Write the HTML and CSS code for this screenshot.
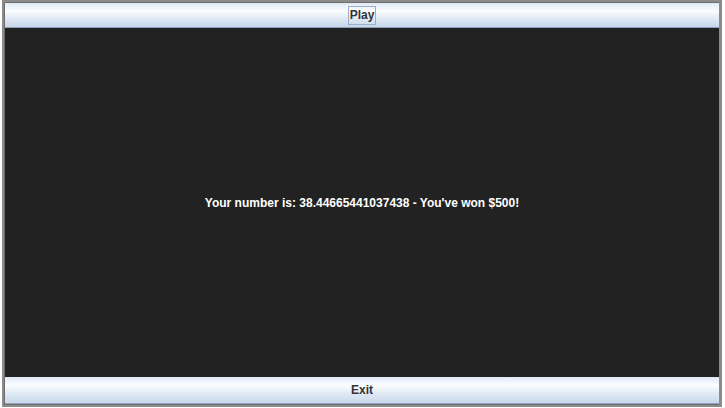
FILE: index.html
```html
<!DOCTYPE html>
<html lang="en">
<head>
    <meta charset="UTF-8">
    <title>Lottery</title>
    <link rel="stylesheet" href="styles.css">
</head>
<body>

<div class="window">
    <button class="bar-button"><span class="focus">Play</span></button>
    <div class="panel">
        <p class="result">Your number is: 38.44665441037438 - You've won $500!</p>
    </div>
    <button class="bar-button bottom">Exit</button>
</div>

</body>
</html>
```

FILE: styles.css
```css
body {
    margin: 0;
    padding: 0;
    background-color: #ffffff;
    font-family: "Liberation Sans", Arial, sans-serif;
}

.window {
    width: 720px;
    height: 407px;
    margin-left: 2px;
    box-sizing: border-box;
    border: 2px solid #8c8c8c;
    border-right-width: 3px;
    background-color: #6e6e6e;
    padding: 1px 0 1px 1px;
    display: flex;
    flex-direction: column;
}

.bar-button {
    height: 25px;
    flex: none;
    margin: 0;
    padding: 0;
    border: none;
    border-top: 1px solid #dfe8f3;
    border-bottom: 1px solid #8ea2bd;
    background: linear-gradient(to bottom, #e4ecf6 0%, #fbfdff 30%, #e2ebf5 60%, #c8d8ea 100%);
    color: #333333;
    font-family: "Liberation Sans", Arial, sans-serif;
    font-size: 12px;
    font-weight: bold;
    display: flex;
    align-items: center;
    justify-content: center;
}

.bar-button.bottom {
    height: 27px;
    padding-bottom: 1px;
}

.focus {
    border: 1px solid #99afcb;
    padding: 1px 1px 2px 1px;
}

.panel {
    flex: 1;
    background-color: #222222;
    display: flex;
    align-items: center;
    justify-content: center;
}

.result {
    margin: 0;
    color: #ffffff;
    font-size: 12px;
    font-weight: bold;
}
```
